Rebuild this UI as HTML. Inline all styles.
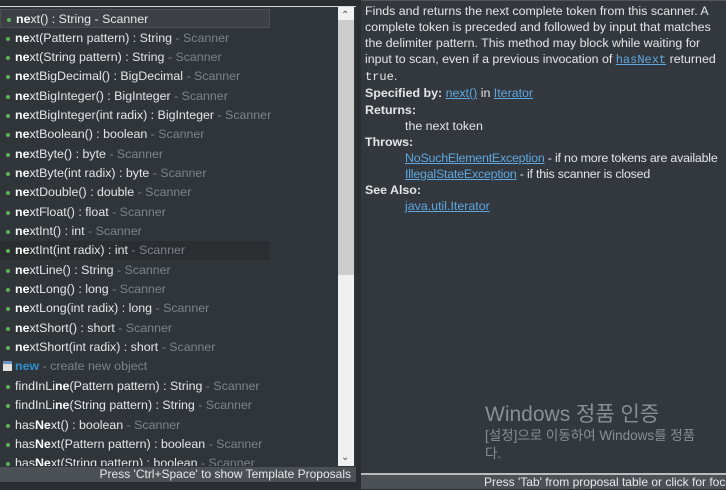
<!DOCTYPE html><html><head><style>
body{margin:0;width:726px;height:489px;background:#2b2e31;position:relative;overflow:hidden;font-family:"Liberation Sans",sans-serif;}
#top{position:absolute;left:0;top:0;width:726px;height:6px;background:#2a2c2e}
#left{position:absolute;left:0;top:6px;width:356px;height:476px;background:#30353a;border-top:1px solid #d8d8d8;box-sizing:border-box}
.r{position:absolute;left:0;width:338px;height:19px;font-size:12.4px;color:#e6e6e6;line-height:19px;white-space:nowrap;padding-left:15px;box-sizing:border-box}
.r:before{content:"";position:absolute;left:6px;top:8px;width:4px;height:4px;border-radius:50%;background:#5ab55a}
.r b{font-weight:bold;color:#fff}
.g{color:#7d8389}
#sb{position:absolute;left:338px;top:7px;width:16px;height:459px;background:#f0f0f0}
#th{position:absolute;left:338px;top:20px;width:16px;height:255px;background:#cdcdcd}
#lst{position:absolute;left:0;top:467px;width:356px;height:15px;background:#4b5055;color:#e8e8e8;font-size:12px;text-align:right;line-height:15px;padding-right:5px;box-sizing:border-box}
#right{position:absolute;left:361px;top:0;width:365px;height:473px;background:#32383e;border-top:1px solid #555;color:#e6e6e6;font-size:12.4px;line-height:16.1px;padding:2px 4px;box-sizing:border-box}
a{color:#5fa8e0;text-decoration:underline}
code{font-family:"Liberation Mono",monospace;font-size:12px}
.in{padding-left:40px}
#rst{position:absolute;left:361px;top:473px;width:365px;height:16px;background:#4b5055;border-top:2px solid #bbb;color:#e8e8e8;font-size:12px;line-height:15px;padding-left:123px;box-sizing:border-box;white-space:nowrap}
#win{position:absolute;left:485px;top:402px;color:#8a8f94;font-family:"Liberation Sans","Noto Sans CJK KR",sans-serif}
</style></head><body>
<div id="top"></div>
<div id="left">
<div class="r" style="top:2px;background:#3d4145;border:1px solid #4c5055;width:270px"><b>ne</b>xt() : String - Scanner</div>
<div class="r" style="top:21.5px"><b>ne</b>xt(Pattern pattern) : String <span class="g">- Scanner</span></div>
<div class="r" style="top:40.8px"><b>ne</b>xt(String pattern) : String <span class="g">- Scanner</span></div>
<div class="r" style="top:60.2px"><b>ne</b>xtBigDecimal() : BigDecimal <span class="g">- Scanner</span></div>
<div class="r" style="top:79.5px"><b>ne</b>xtBigInteger() : BigInteger <span class="g">- Scanner</span></div>
<div class="r" style="top:98.9px"><b>ne</b>xtBigInteger(int radix) : BigInteger <span class="g">- Scanner</span></div>
<div class="r" style="top:118.2px"><b>ne</b>xtBoolean() : boolean <span class="g">- Scanner</span></div>
<div class="r" style="top:137.6px"><b>ne</b>xtByte() : byte <span class="g">- Scanner</span></div>
<div class="r" style="top:156.9px"><b>ne</b>xtByte(int radix) : byte <span class="g">- Scanner</span></div>
<div class="r" style="top:176.3px"><b>ne</b>xtDouble() : double <span class="g">- Scanner</span></div>
<div class="r" style="top:195.6px"><b>ne</b>xtFloat() : float <span class="g">- Scanner</span></div>
<div class="r" style="top:215px"><b>ne</b>xtInt() : int <span class="g">- Scanner</span></div>
<div class="r" style="top:234.3px;background:#2b2e31;width:270px"><b>ne</b>xtInt(int radix) : int <span class="g">- Scanner</span></div>
<div class="r" style="top:253.7px"><b>ne</b>xtLine() : String <span class="g">- Scanner</span></div>
<div class="r" style="top:273px"><b>ne</b>xtLong() : long <span class="g">- Scanner</span></div>
<div class="r" style="top:292.4px"><b>ne</b>xtLong(int radix) : long <span class="g">- Scanner</span></div>
<div class="r" style="top:311.7px"><b>ne</b>xtShort() : short <span class="g">- Scanner</span></div>
<div class="r" style="top:331.1px"><b>ne</b>xtShort(int radix) : short <span class="g">- Scanner</span></div>
<div class="r" style="top:350.4px;color:#7d8389"><span style="position:absolute;left:3px;top:4px;width:9px;height:10px;background:#e0e0e0;border-top:3px solid #6a8fc0;box-sizing:border-box"></span><b style="color:#2f8fd0">new</b> - create new object</div>
<div class="r" style="top:369.8px">findInLi<b>ne</b>(Pattern pattern) : String <span class="g">- Scanner</span></div>
<div class="r" style="top:389.1px">findInLi<b>ne</b>(String pattern) : String <span class="g">- Scanner</span></div>
<div class="r" style="top:408.5px">has<b>Ne</b>xt() : boolean <span class="g">- Scanner</span></div>
<div class="r" style="top:427.8px">has<b>Ne</b>xt(Pattern pattern) : boolean <span class="g">- Scanner</span></div>
<div class="r" style="top:447.2px;height:12px;overflow:hidden">has<b>Ne</b>xt(String pattern) : boolean <span class="g">- Scanner</span></div>
</div>
<div id="sb"></div><div id="th"></div>
<div style="position:absolute;left:341px;top:10px;font-size:10px;color:#555">&#8963;</div>
<div style="position:absolute;left:341px;top:452px;font-size:10px;color:#555">&#8964;</div>
<div id="lst">Press 'Ctrl+Space' to show Template Proposals</div>
<div id="right">
Finds and returns the next complete token from this scanner. A complete token is preceded and followed by input that matches the delimiter pattern. This method may block while waiting for input to scan, even if a previous invocation of <a><code>hasNext</code></a> returned <code>true</code>.<br>
<b>Specified by:</b> <a>next()</a> in <a>Iterator</a><br>
<b>Returns:</b><br><div class="in">the next token</div>
<b>Throws:</b><br><div class="in" style="white-space:nowrap;letter-spacing:-0.2px"><a>NoSuchElementException</a> - if no more tokens are available<br><a>IllegalStateException</a> - if this scanner is closed</div>
<b>See Also:</b><br><div class="in"><a>java.util.Iterator</a></div>
</div>
<div id="win"><div style="font-size:21px;line-height:25px">Windows 정품 인증</div><div style="font-size:13.5px;line-height:18px;white-space:nowrap">[설정]으로 이동하여 Windows를 정품<br>다.</div></div>
<div id="rst">Press 'Tab' from proposal table or click for focus</div>
</body></html>
